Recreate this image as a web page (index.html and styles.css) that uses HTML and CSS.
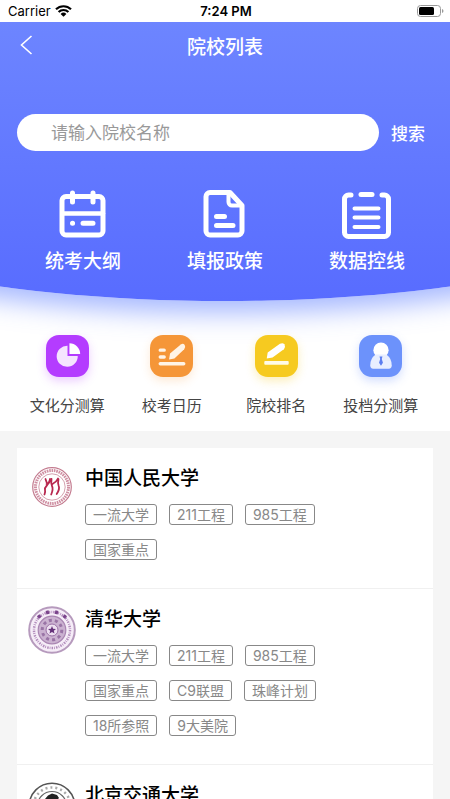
FILE: index.html
```html
<!DOCTYPE html>
<html lang="zh-CN">
<head>
    <meta charset="UTF-8">
    <meta name="viewport" content="width=device-width, initial-scale=1.0">
    <title>院校列表</title>
    <link rel="stylesheet" href="styles.css">
</head>
<body>
    <div class="app">
        <div class="status-bar">
            <div class="carrier">
                <span>Carrier</span>
                <svg width="17" height="12" viewBox="0 0 17 12">
                    <path d="M1 4.300a10.800 10.800 0 0 1 15 0M3.600 7a7 7 0 0 1 9.800 0" fill="none" stroke="#000" stroke-width="2.200"/>
                    <path d="M8.500 11.800L5.600 9a4.200 4.200 0 0 1 5.800 0z"/>
                </svg>
            </div>
            <span class="time">7:24 PM</span>
            <div class="battery">
                <svg width="27" height="12" viewBox="0 0 27 12">
                    <rect x=".5" y=".5" width="23" height="11" rx="3" fill="none" stroke="#999"/>
                    <rect x="2" y="2" width="15" height="8" rx="1.500"/>
                    <path d="M25 4v4q1.500-.6 1.500-2T25 4z" fill="#999"/>
                </svg>
            </div>
        </div>

        <header class="header">
            <div class="nav-bar">
                <button type="button" class="back" aria-label="返回">
                    <svg width="13" height="20" viewBox="0 0 13 20"><path d="M11.500 1L1.500 10l10 9" fill="none" stroke="#fff" stroke-width="1.600"/></svg>
                </button>
                <h1>院校列表</h1>
            </div>

            <form class="search" id="searchForm">
                <input type="text" name="keyword" placeholder="请输入院校名称" aria-label="院校名称">
                <button type="button">搜索</button>
            </form>

            <nav class="main-menu">
                <a href="#outline">
                    <svg width="50" height="50" viewBox="0 0 50 50" fill="none" stroke="#fff" stroke-width="5" stroke-linecap="round">
                        <rect x="4" y="7.500" width="41" height="38.500" rx="4"/>
                        <path d="M5 24.500h40" stroke-width="4.500"/>
                        <path d="M14.500 4v9M35 4v9"/>
                        <path d="M14.500 34.200h.1M25 34.200h10"/>
                    </svg>
                    <span>统考大纲</span>
                </a>
                <a href="#policy">
                    <svg width="50" height="50" viewBox="0 0 50 50" fill="none" stroke="#fff" stroke-width="5" stroke-linecap="round" stroke-linejoin="round">
                        <path d="M10 3.500h20l12 13V42a4 4 0 0 1-4 4H10a4 4 0 0 1-4-4V7.500a4 4 0 0 1 4-4z"/>
                        <path d="M28.500 4.500V13a3.500 3.500 0 0 0 3.500 3.500h9" stroke-width="4"/>
                        <path d="M16.500 27.500h8M16.500 36.500h16.500"/>
                    </svg>
                    <span>填报政策</span>
                </a>
                <a href="#data">
                    <svg width="50" height="50" viewBox="0 0 50 50" fill="none" stroke="#fff" stroke-width="5" stroke-linecap="round">
                        <path d="M9 6H6.500a4 4 0 0 0-4 4v33.500a4 4 0 0 0 4 4h36a4 4 0 0 0 4-4V10a4 4 0 0 0-4-4H40"/>
                        <path d="M19 5.500h11"/>
                        <path d="M12.500 19.500h24M12.500 28.500h24M12.500 38h24" stroke-width="4"/>
                    </svg>
                    <span>数据控线</span>
                </a>
            </nav>
        </header>

        <nav class="sub-menu">
            <a href="#culture">
                <svg class="icon purple" viewBox="0 0 43 43">
                    <path d="M21.500 11A10.800 10.800 0 1 0 32 21.500H21.500z" fill="#f5e4ff"/>
                    <path d="M23.500 8.500A11 11 0 0 1 34.500 19.500h-11z" fill="#fff"/>
                </svg>
                <span>文化分测算</span>
            </a>
            <a href="#calendar">
                <svg class="icon orange" viewBox="0 0 43 43" fill="none" stroke="#fff4e6" stroke-linecap="round">
                    <path d="M10 15.500h4M10 22.500h4" stroke-width="3.500"/>
                    <path d="M10 29.500h24" stroke-width="3.500"/>
                    <path d="M19 25l1-6L31 9.700q2.500-1.500 4 .5 1.500 2.500-.5 4.500L24.500 24z" fill="#fff4e6" stroke="none"/>
                </svg>
                <span>校考日历</span>
            </a>
            <a href="#rank">
                <svg class="icon yellow" viewBox="0 0 43 43">
                    <path d="M11.500 24l1-6L25 9q3-1.500 4.500.5 1.500 3-.5 5L17.500 23z" fill="#fff"/>
                    <rect x="9" y="26.500" width="25" height="4" rx="1" fill="#fffbe8"/>
                </svg>
                <span>院校排名</span>
            </a>
            <a href="#score">
                <svg class="icon blue" viewBox="0 0 43 43">
                    <circle cx="22" cy="15.500" r="7.800" fill="#fff"/>
                    <path d="M16.500 20h11q5.500 4 5.500 11 0 3.500-3 3.500H14q-3 0-3-3.500 0-7 5.500-11z" fill="#e8eeff"/>
                    <path d="M20.500 22h3l-.7 2.500 1.200 4-2 3-2-3 1.200-4z" fill="#5b7df0"/>
                </svg>
                <span>投档分测算</span>
            </a>
        </nav>

        <main class="content">
            <ul class="school-list">
                <li class="school">
                    <svg class="logo" viewBox="0 0 48 48" fill="none">
                        <circle cx="24" cy="22" r="19.300" stroke="#c37b8f" stroke-width="1.200"/>
                        <circle cx="24" cy="22" r="16.500" stroke="#cf8fa2" stroke-width="3" stroke-dasharray="1.600 .8"/>
                        <circle cx="24" cy="22" r="13.200" stroke="#c9899a" stroke-width=".8"/>
                        <g stroke="#b8284f" stroke-width="1.800" stroke-linecap="round" stroke-linejoin="round">
                            <path d="M17.500 14l1.200 3.500M22 14q-.5 4-3.500 7-2 2-1.500 4 .5 2-.5 4.500"/>
                            <path d="M23.500 14q-.8 4.500.5 7 1.500 3-.8 8.500"/>
                            <path d="M24.500 19q4-2 5.500-5.500M30.500 14q-1 4 .2 7 1.300 3-2 8M18.500 19q3-1 4.500-4"/>
                        </g>
                    </svg>
                    <div class="info">
                        <h2>中国人民大学</h2>
                        <ul class="tags">
                            <li>一流大学</li>
                            <li>211工程</li>
                            <li>985工程</li>
                            <li>国家重点</li>
                        </ul>
                    </div>
                </li>
                <li class="school">
                    <svg class="logo" viewBox="0 0 48 48" fill="none">
                        <circle cx="24" cy="24" r="22.800" fill="#f6edf8" stroke="#b69abd" stroke-width="2"/>
                        <circle cx="24" cy="24" r="18" stroke="#b28dbc" stroke-width="2.500" stroke-dasharray="1.500 1.200 .8 1"/>
                        <path d="M10 11.500l2.500-2M18 6.800l3-.8M27 6l3 .8M35.500 9.500l2.500 2" stroke="#7a438b" stroke-width="3.500"/>
                        <circle cx="24" cy="24" r="13.800" fill="#cbb2d1" stroke="#a985b2" stroke-width="1.200"/>
                        <circle cx="24" cy="24" r="9.800" stroke="#9a74a6" stroke-width="3" stroke-dasharray="3 3.100"/>
                        <circle cx="24" cy="24" r="6" fill="#eee0f1" stroke="#9a71a6"/>
                        <path d="M24 20l1.100 2.700 2.900.2-2.200 1.900.7 2.800-2.500-1.600-2.500 1.600.7-2.800-2.200-1.900 2.900-.2z" fill="#65327a"/>
                    </svg>
                    <div class="info">
                        <h2>清华大学</h2>
                        <ul class="tags">
                            <li>一流大学</li>
                            <li>211工程</li>
                            <li>985工程</li>
                            <li>国家重点</li>
                            <li>C9联盟</li>
                            <li>珠峰计划</li>
                            <li>18所参照</li>
                            <li>9大美院</li>
                        </ul>
                    </div>
                </li>
                <li class="school">
                    <svg class="logo" viewBox="0 0 48 48" fill="none">
                        <circle cx="24" cy="24" r="22.800" stroke="#555" stroke-width="1.600"/>
                        <circle cx="24" cy="24" r="18.500" stroke="#aaa" stroke-width="2.500" stroke-dasharray="2 3"/>
                        <circle cx="24" cy="24" r="14.500" stroke="#666" stroke-width="1.200"/>
                        <path d="M17 17l3-3.500 4-2 5 1.500 2 3-2 2 3 4-4 10H18l-3-9z" fill="#222"/>
                    </svg>
                    <div class="info">
                        <h2>北京交通大学</h2>
                    </div>
                </li>
            </ul>
        </main>
    </div>
</body>
</html>
```

FILE: styles.css
```css
* {
    box-sizing: border-box;
}

body {
    margin: 0;
    background-color: #f5f5f5;
    font-family: Inter, "Noto Sans CJK SC", sans-serif;
}

h1, h2, ul {
    margin: 0;
    padding: 0;
    font-weight: normal;
    list-style: none;
}

a {
    text-decoration: none;
}

svg {
    display: block;
}

button {
    padding: 0;
    border: none;
    background: none;
    color: #fff;
    font-family: inherit;
    cursor: pointer;
}

.app {
    display: flex;
    flex-direction: column;
    height: 100vh;
    overflow: hidden;
}

/* status bar */
.status-bar {
    display: grid;
    grid-template-columns: 1fr auto 1fr;
    align-items: center;
    flex: none;
    height: 22px;
    padding: 0 6px 0 8px;
    background-color: #fff;
    font-size: 13px;
}

.carrier {
    display: flex;
    align-items: center;
    gap: 4px;
}

.time {
    font-weight: 600;
}

.battery {
    justify-self: end;
}

/* blue header */
.header {
    position: relative;
    z-index: 1;
    flex: none;
    height: 279px;
    background-color: #fff;
    color: #fff;
}

/* wide ellipse for the curved bottom edge */
.header::before {
    content: "";
    position: absolute;
    z-index: -1;
    top: 0;
    left: -50%;
    width: 200%;
    height: 100%;
    border-radius: 0 0 50% 50% / 0 0 108px 108px;
    background: linear-gradient(#6d85ff, #586cff);
    box-shadow: 0 12px 26px rgba(80, 115, 255, 0.5);
    clip-path: inset(0 0 -60px 0);
}

.nav-bar {
    display: grid;
    grid-template-columns: 41px 1fr 41px;
    align-items: center;
    height: 46px;
}

.back {
    justify-self: end;
    padding: 0 8px;
}

.nav-bar h1 {
    font-size: 19px;
    font-weight: 500;
    text-align: center;
}

.search {
    display: flex;
    align-items: center;
    margin-top: 46px;
    padding: 0 25px 0 17px;
    gap: 12px;
}

.search input {
    flex: 1;
    min-width: 0;
    height: 37px;
    padding: 0 34px;
    border: none;
    border-radius: 19px;
    background-color: #fff;
    color: #333;
    font-family: inherit;
    font-size: 17px;
}

.search input::placeholder {
    color: #999;
}

.search button {
    font-size: 17px;
    font-weight: 500;
}

.main-menu {
    display: grid;
    grid-template-columns: repeat(3, 1fr);
    margin-top: 38px;
    padding: 0 12px;
}

.main-menu a {
    display: flex;
    flex-direction: column;
    align-items: center;
    gap: 9px;
    color: #fff;
    font-size: 19px;
    font-weight: 500;
    line-height: 28px;
}

/* coloured icons */
.sub-menu {
    display: grid;
    grid-template-columns: repeat(4, 1fr);
    flex: none;
    padding: 34px 17px 13px 15px;
    background-color: #fff;
}

.sub-menu a {
    position: relative;
    z-index: 2;
    display: flex;
    flex-direction: column;
    align-items: center;
    gap: 17px;
    color: #444;
    font-size: 15px;
    line-height: 24px;
}

.icon {
    width: 43px;
    height: 42px;
    border-radius: 13px;
}

.purple {
    background-color: #b43cff;
    box-shadow: 0 4px 10px rgba(180, 60, 255, 0.25);
}

.orange {
    background-color: #f59638;
    box-shadow: 0 4px 10px rgba(245, 150, 56, 0.2);
}

.yellow {
    background-color: #f6ca20;
    box-shadow: 0 4px 10px rgba(246, 202, 32, 0.3);
}

.blue {
    background-color: #6c92fb;
    box-shadow: 0 4px 10px rgba(108, 146, 251, 0.3);
}

/* school list */
.content {
    flex: 1;
    min-height: 0;
    padding: 17px 17px 0;
    overflow-y: auto;
    scrollbar-width: none;
}

.school-list {
    background-color: #fff;
}

.school {
    display: flex;
    gap: 9px;
    padding: 17px 40px 28px 11px;
    border-bottom: 1px solid #f0f0f0;
}

.logo {
    flex: none;
    width: 48px;
    height: 48px;
}

.info h2 {
    margin-top: 2px;
    color: #000;
    font-size: 19px;
    font-weight: 500;
    line-height: 23px;
}

.tags {
    display: flex;
    flex-wrap: wrap;
    gap: 14px 12px;
    margin-top: 14px;
}

.tags li {
    padding: 0 7px;
    border: 1px solid #888;
    border-radius: 3px;
    color: #888;
    font-size: 14px;
    line-height: 19px;
}
```
